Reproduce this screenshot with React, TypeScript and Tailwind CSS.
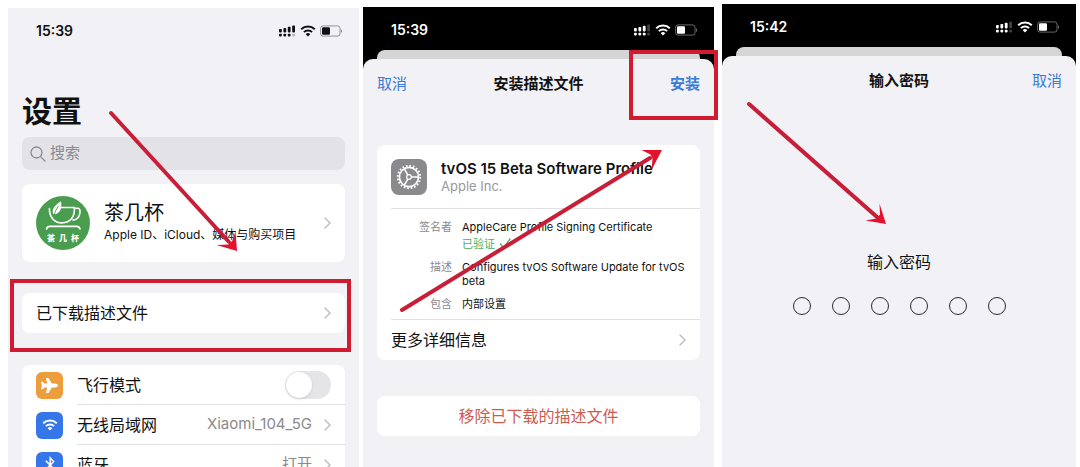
import type { ReactNode } from "react";
import { FaBluetoothB, FaPlane } from "react-icons/fa";

function WifiGlyph({ className }: { className?: string }) {
  return (
    <svg viewBox="0 0 16 12" className={className} fill="none" stroke="currentColor" strokeWidth="2" aria-hidden="true">
      <path d="M1.2 4.3a9.7 9.7 0 0 1 13.6 0" />
      <path d="M3.9 7.1a5.8 5.8 0 0 1 8.2 0" />
      <path d="M8 11.6 5.7 9.2a3.3 3.3 0 0 1 4.6 0Z" fill="currentColor" stroke="none" />
    </svg>
  );
}

function SignalGlyph() {
  const bars = [
    { x: 0, y: 4, h: 3.4 },
    { x: 4.4, y: 3, h: 4.4 },
    { x: 8.8, y: 1.8, h: 5.6 },
  ];
  return (
    <svg viewBox="0 0 17 12" className="h-3 w-[17px]" fill="currentColor" aria-hidden="true">
      {bars.map((b) => (
        <g key={b.x}>
          <rect x={b.x} y={b.y} width="2.8" height={b.h} rx="0.8" />
          <rect x={b.x} y="8.8" width="2.8" height="2.6" rx="0.8" />
        </g>
      ))}
    </svg>
  );
}

function StatusBar({ time, full }: { time: string; full?: boolean }) {
  return (
    <div className="flex h-[43px] items-center justify-between pl-7 pr-4 pt-0.5">
      <span className="text-sm font-semibold">{time}</span>
      <div className="flex items-center gap-1">
        <div className="relative">
          <SignalGlyph />
          <svg
            viewBox="0 0 17 12"
            className={full ? "absolute inset-0 h-3 w-[17px]" : "absolute inset-0 h-3 w-[17px] opacity-25"}
            fill="currentColor"
            aria-hidden="true"
          >
            <rect x="13.2" y="0.5" width="2.8" height="6.9" rx="0.8" />
            <rect x="13.2" y="8.8" width="2.8" height="2.6" rx="0.8" opacity={full ? 0.25 : 1} />
          </svg>
        </div>
        <WifiGlyph className="h-3 w-4" />
        <svg viewBox="0 0 23 12" className="h-3 w-[23px]" fill="currentColor" aria-hidden="true">
          <rect x="0.6" y="0.9" width="19.4" height="10.2" rx="2.4" fill="none" stroke="currentColor" strokeWidth="1" opacity="0.4" />
          <path d="M21 4.2c1.3.5 1.3 3.1 0 3.6Z" opacity="0.5" />
          <rect x="2" y="2.2" width="8" height="7.6" rx="1.2" />
        </svg>
      </div>
    </div>
  );
}

function Chevron() {
  return (
    <svg viewBox="0 0 7 12" className="h-3 w-[7px] shrink-0" fill="none" stroke="#bfbfc4" strokeWidth="1.5" strokeLinecap="round" strokeLinejoin="round" aria-hidden="true">
      <path d="M1 1l5 5-5 5" />
    </svg>
  );
}

function Arrow({ line, head }: { line: string; head: string }) {
  return (
    <svg className="pointer-events-none absolute inset-0 z-10 h-full w-full" aria-hidden="true">
      <path d={line} stroke="#c81e38" strokeWidth="4" strokeLinecap="round" />
      <path d={head} fill="#e3122d" />
    </svg>
  );
}

function CupLogo() {
  return (
    <div className="relative h-[54px] w-[54px] shrink-0 rounded-full bg-[#4a9d4f]">
      <svg viewBox="0 0 54 54" className="absolute inset-0 h-full w-full" fill="none" stroke="#fff" strokeWidth="1.6" strokeLinecap="round" strokeLinejoin="round" aria-hidden="true">
        <path d="M25.5 11.5h12.8c.8 9-3.8 15.4-12.3 15.4-7.8 0-12.6-5.6-12.6-14.4" />
        <path d="M39 12.3h2.3c2.3 0 3 1.4 2.7 4-.4 4.8-2.900 7.600-7 7.800" />
        <path d="M17 18c-1.4-6.5 3-9.2 8-12.8.9 5.5.6 10.7-5.500 13Z" fill="#fff" stroke="none" />
        <path d="M18 19c1.1-3.6 2.5-6.2 4.5-8.8" stroke="#4a9d4f" strokeWidth="0.9" />
        <path d="M10.5 33c.5-2 1.5-2.6 3.5-2.6h26.5c2 0 3 .6 3.5 2.6" />
      </svg>
      <span className="absolute inset-x-0 bottom-2 flex justify-center gap-1 text-[8px] font-black leading-2 text-white">
        <span>茶</span>
        <span>几</span>
        <span>杯</span>
      </span>
    </div>
  );
}

function GearIcon() {
  return (
    <svg viewBox="0 0 36 36" className="h-9 w-9 shrink-0" fill="none" stroke="#fff" aria-hidden="true">
      <rect width="36" height="36" rx="8" fill="#8a8a8c" stroke="none" />
      <circle cx="18" cy="18" r="11.2" strokeWidth="2" strokeDasharray="1.7 1.819" />
      <circle cx="18" cy="18" r="9.6" strokeWidth="1.6" />
      <circle cx="18" cy="18" r="2.3" strokeWidth="1.2" />
      <path d="M20.3 18h7M16.9 16l-3.6-6.2M16.9 20l-3.6 6.2" strokeWidth="1.5" />
    </svg>
  );
}

function SettingRow({ icon, color, label, children }: { icon: ReactNode; color: string; label: string; children: ReactNode }) {
  return (
    <li className="flex h-10 items-center gap-3.5 pl-3.5">
      <span className={`flex h-[27px] w-[27px] shrink-0 items-center justify-center rounded-md text-white ${color}`}>{icon}</span>
      <div className="flex h-full flex-1 items-center justify-between border-b border-[#e4e4e6] pr-3.5">
        {label === "飞行模式" ? <label htmlFor="airplane">{label}</label> : <span>{label}</span>}
        {children}
      </div>
    </li>
  );
}

function SettingsScreen() {
  return (
    <section className="relative mt-2 bg-[#f1f1f6]">
      <StatusBar time="15:39" full />
      <div className="px-3.5">
        <h1 className="mt-10 text-[30px] font-bold leading-10">设置</h1>
        <label className="mt-1.5 flex h-[33px] items-center gap-1 rounded-lg bg-[#e3e3e7] px-2 text-[#8a8a8e]">
          <svg viewBox="0 0 16 16" className="h-4 w-4 shrink-0" fill="none" stroke="currentColor" strokeWidth="1.3" strokeLinecap="round" aria-hidden="true">
            <circle cx="6.5" cy="6.5" r="5.5" />
            <path d="M10.6 10.6l4.4 4.4" />
          </svg>
          <input type="search" aria-label="搜索" placeholder="搜索" className="min-w-0 flex-1 bg-transparent text-[15px] outline-none placeholder:text-[#8a8a8e]" />
        </label>
        <a href="#account" className="mt-3.5 flex h-[78px] items-center gap-3.5 rounded-lg bg-white px-3.5">
          <CupLogo />
          <span className="flex-1">
            <span className="block text-xl leading-6">茶几杯</span>
            <span className="block text-xs leading-5">Apple ID、iCloud、媒体与购买项目</span>
          </span>
          <Chevron />
        </a>
        <div className="relative mt-[31px]">
          <a href="#profile" className="flex h-10 items-center justify-between rounded-lg bg-white px-3.5">
            已下载描述文件
            <Chevron />
          </a>
          <div className="pointer-events-none absolute -bottom-[19px] -left-3 -right-1.5 -top-3.5 border-4 border-[#d01c30]" />
        </div>
        <ul className="mt-8 rounded-t-lg bg-white">
          <SettingRow icon={<FaPlane size={17} />} color="bg-[#ec9e3c]" label="飞行模式">
            <span className="relative h-7 w-[46px]">
              <input id="airplane" type="checkbox" role="switch" className="peer h-7 w-[46px] appearance-none rounded-full bg-[#e5e5e7] checked:bg-[#34c759]" />
              <span className="pointer-events-none absolute left-px top-px h-[26px] w-[26px] rounded-full bg-white shadow peer-checked:left-[19px]" />
            </span>
          </SettingRow>
          <SettingRow icon={<WifiGlyph className="h-3 w-4" />} color="bg-[#3576e8]" label="无线局域网">
            <span className="flex items-center gap-3 text-[15px] text-[#8a8a8e]">
              Xiaomi_104_5G
              <Chevron />
            </span>
          </SettingRow>
          <SettingRow icon={<FaBluetoothB size={18} />} color="bg-[#3576e8]" label="蓝牙">
            <span className="flex items-center gap-3 text-[15px] text-[#8a8a8e]">
              打开
              <Chevron />
            </span>
          </SettingRow>
        </ul>
      </div>
      <Arrow line="M103 105L221 234" head="M229 243L208.5 237L220.5 236.5L224.5 232.5L227.5 223Z" />
    </section>
  );
}

function SheetBackdrop() {
  return <div className="mx-3.5 h-[9px] rounded-t-lg bg-[#d5d5d8]" />;
}

function InstallScreen() {
  return (
    <section className="relative mt-[7px] flex flex-col bg-black">
      <div className="text-white">
        <StatusBar time="15:39" />
      </div>
      <SheetBackdrop />
      <div className="relative flex-1 rounded-t-[10px] bg-[#f1f1f6] px-3.5">
        <header className="grid h-[50px] grid-cols-3 items-center">
          <button type="button" className="justify-self-start text-[15px] text-[#3a7bd5]">取消</button>
          <h2 className="justify-self-center whitespace-nowrap text-[15px] font-bold">安装描述文件</h2>
          <button type="button" className="justify-self-end text-[15px] font-bold text-[#3a7bd5]">安装</button>
        </header>
        <div className="pointer-events-none absolute -right-1 -top-[9px] z-10 h-[70px] w-[89px] border-4 border-[#d01c30]" />
        <article className="mt-9 rounded-lg bg-white pl-3.5">
          <div className="flex h-16 items-center gap-3.5 border-b border-[#e0e0e2]">
            <GearIcon />
            <div>
              <h3 className="whitespace-nowrap text-[15px] font-semibold leading-[18px]">tvOS 15 Beta Software Profile</h3>
              <p className="text-[13px] leading-4 text-[#98989c]">Apple Inc.</p>
            </div>
          </div>
          <dl className="grid grid-cols-[61px_1fr] gap-x-2.5 gap-y-[9px] border-b border-[#e0e0e2] pb-2 pr-3.5 pt-[11px] text-[11px] leading-[14px]">
            <dt className="text-right text-[#8a8a8e]">签名者</dt>
            <dd>
              AppleCare Profile Signing Certificate
              <span className="mt-[3px] flex items-center gap-1 text-[#4cae54]">
                已验证
                <svg viewBox="0 0 12 12" className="h-3 w-3" fill="none" stroke="currentColor" strokeWidth="1.3" strokeLinecap="round" aria-hidden="true">
                  <path d="M1.5 6l3 4L11 0.8" />
                </svg>
              </span>
            </dd>
            <dt className="text-right text-[#8a8a8e]">描述</dt>
            <dd>Configures tvOS Software Update for tvOS beta</dd>
            <dt className="text-right text-[#8a8a8e]">包含</dt>
            <dd>内部设置</dd>
          </dl>
          <a href="#details" className="flex h-10 items-center justify-between pr-3.5">
            更多详细信息
            <Chevron />
          </a>
        </article>
        <button type="button" className="mt-9 h-10 w-full rounded-lg bg-white text-[#cf5b4f]">移除已下载的描述文件</button>
      </div>
      <Arrow line="M39 303L287 151" head="M299 143L278.5 143L287.5 147.5L289.5 151.5L288.5 163Z" />
    </section>
  );
}

function PasscodeScreen() {
  return (
    <section className="relative ml-1 mt-1 flex flex-col bg-black">
      <div className="text-white">
        <StatusBar time="15:42" />
      </div>
      <SheetBackdrop />
      <div className="flex-1 rounded-t-[10px] bg-[#f1f1f6] px-3.5">
        <header className="grid h-[50px] grid-cols-3 items-center">
          <h2 className="col-start-2 justify-self-center text-[15px] font-bold">输入密码</h2>
          <button type="button" className="justify-self-end text-[15px] text-[#3a7bd5]">取消</button>
        </header>
        <fieldset className="mt-36">
          <legend className="mx-auto leading-6">输入密码</legend>
          <div className="mt-[23px] flex justify-center gap-[21px]">
            {[1, 2, 3, 4, 5, 6].map((n) => (
              <input
                key={n}
                type="password"
                maxLength={1}
                aria-label={`${n}`}
                className="h-[18px] w-[18px] rounded-full border border-[#2c2c30] bg-transparent text-center outline-none"
              />
            ))}
          </div>
        </fieldset>
      </div>
      <Arrow line="M27 100L155 213" head="M164 220L143.5 216.5L154.5 214.5L158 210.5L157.5 199.5Z" />
    </section>
  );
}

export default function App() {
  return (
    <main className="grid h-screen grid-cols-[351fr_351fr_358fr] gap-1 overflow-hidden bg-white pl-2 pr-1 font-['Inter','Noto_Sans_CJK_SC',sans-serif] text-base text-[#111]">
      <SettingsScreen />
      <InstallScreen />
      <PasscodeScreen />
    </main>
  );
}
